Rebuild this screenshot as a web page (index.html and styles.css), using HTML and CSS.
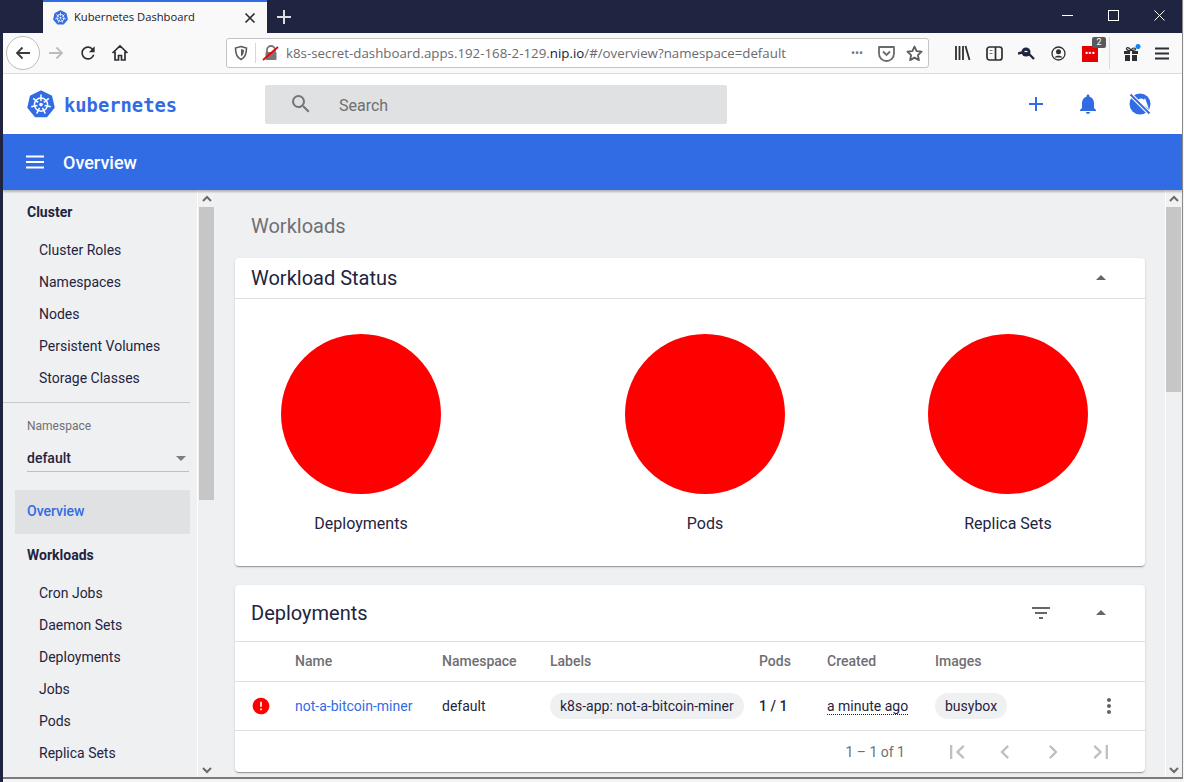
FILE: index.html
```html
<!DOCTYPE html>
<html lang="en">
<head>
  <meta charset="UTF-8">
  <title>Kubernetes Dashboard</title>
  <link rel="stylesheet" href="styles.css">
</head>
<body>
  <svg class="defs" width="0" height="0">
    <symbol id="k8s" viewBox="0 0 28 28">
      <polygon points="14,1.5 24.2,6.4 26.7,17.4 19.6,26.2 8.4,26.2 1.3,17.4 3.8,6.4" fill="#326ce5" stroke="#326ce5" stroke-width="2" stroke-linejoin="round"/>
      <g stroke="#fff" fill="none" stroke-width="1.5">
        <circle cx="14" cy="14.6" r="6.6"/>
        <path d="M14 4.6v6.4M21.8 8.4l-5 4M23.8 16.8l-6.2-1.4M18.3 23.6l-2.8-5.7M9.7 23.6l2.8-5.7M4.2 16.8l6.2-1.4M6.2 8.4l5 4"/>
      </g>
      <circle cx="14" cy="14.6" r="1.8" fill="#fff"/>
    </symbol>
  </svg>

  <div class="window">
    <div class="titlebar">
      <div class="tab">
        <svg class="favicon" width="15" height="15"><use href="#k8s"/></svg>
        <span class="tab-title">Kubernetes Dashboard</span>
        <svg class="tab-close" width="12" height="12" viewBox="0 0 12 12"><path d="M1.5 1.5l9 9M10.5 1.5l-9 9" stroke="#2a2a2e" stroke-width="1.6"/></svg>
      </div>
      <svg class="new-tab" width="14" height="14" viewBox="0 0 14 14"><path d="M7 0v14M0 7h14" stroke="#dcdde3" stroke-width="2"/></svg>
      <div class="win-controls">
        <div class="win-btn"><svg width="11" height="11" viewBox="0 0 11 11"><path d="M0 5.5h11" stroke="#fff"/></svg></div>
        <div class="win-btn"><svg width="11" height="11" viewBox="0 0 11 11"><rect x=".5" y=".5" width="10" height="10" fill="none" stroke="#fff"/></svg></div>
        <div class="win-btn"><svg width="11" height="11" viewBox="0 0 11 11"><path d="M.5.5l10 10M10.500.5l-10 10" stroke="#fff"/></svg></div>
      </div>
    </div>

    <div class="toolbar">
      <div class="back-btn">
        <svg width="18" height="18" viewBox="0 0 18 18"><path d="M16 9H3M8.500 3.500L3 9l5.500 5.500" fill="none" stroke="#3b3b40" stroke-width="1.800"/></svg>
      </div>
      <div class="tool-btn">
        <svg width="18" height="18" viewBox="0 0 18 18"><path d="M2 9h13M9.500 3.500L15 9l-5.500 5.500" fill="none" stroke="#bcbcbf" stroke-width="1.800"/></svg>
      </div>
      <div class="tool-btn">
        <svg width="20" height="20" viewBox="0 0 24 24"><path fill="#2f2f33" d="M17.650 6.350A7.958 7.958 0 0 0 12 4c-4.420 0-7.990 3.580-7.990 8s3.570 8 7.990 8c3.730 0 6.840-2.550 7.730-6h-2.080A5.990 5.990 0 0 1 12 18c-3.310 0-6-2.690-6-6s2.690-6 6-6c1.660 0 3.140.690 4.220 1.780L13 11h7V4l-2.350 2.350z"/></svg>
      </div>
      <div class="tool-btn">
        <svg width="18" height="18" viewBox="0 0 18 18"><path d="M1.500 9L9 2l7.500 7M4 7.500V16h3.500v-4.500h3V16H14V7.500" fill="none" stroke="#2f2f33" stroke-width="1.700"/></svg>
      </div>

      <div class="urlbar">
        <svg class="url-shield" width="16" height="16" viewBox="0 0 16 16"><path d="M8 1.500l5.500 1.500c0 5-1 9.500-5.500 11.500C3.500 12.500 2.500 8 2.500 3z" fill="none" stroke="#5b5b60" stroke-width="1.600"/><path d="M8 4v7.500c2-1.200 3-3.500 3-6.500z" fill="#5b5b60"/></svg>
        <span class="url-sep"></span>
        <svg class="url-lock" width="18" height="18" viewBox="0 0 18 18"><path d="M5 8V6a4 4 0 0 1 8 0v2" fill="none" stroke="#77777b" stroke-width="1.800"/><rect x="3.500" y="8" width="11" height="8" rx="1" fill="#77777b"/><path d="M1 16L16 3" stroke="#f00000" stroke-width="1.800"/></svg>
        <span class="url-text">k8s-secret-dashboard.apps.192-168-2-129.<b>nip.io</b>/#/overview?namespace=default</span>
        <span class="url-dots">•••</span>
        <svg class="url-icon" width="17" height="17" viewBox="0 0 17 17"><path d="M1 2h15v6.500a7.500 7.500 0 0 1-15 0z" fill="none" stroke="#6a6a6e" stroke-width="1.800" stroke-linejoin="round"/><path d="M5 6.500l3.500 3.500L12 6.500" fill="none" stroke="#6a6a6e" stroke-width="1.800"/></svg>
        <svg class="url-icon" width="17" height="17" viewBox="0 0 17 17"><path d="M8.500 1.500l2.100 4.600 5 .6-3.700 3.400 1 5-4.400-2.500-4.400 2.500 1-5L1.400 6.700l5-.6z" fill="none" stroke="#5b5b60" stroke-width="1.800" stroke-linejoin="round"/></svg>
      </div>

      <div class="tool-right">
        <div class="ext-btn"><svg width="17" height="16" viewBox="0 0 17 16"><path d="M2 1v14M5.500 1v14M9 1v14M11.500 1l4 14" stroke="#2f2f33" stroke-width="1.800" fill="none"/></svg></div>
        <div class="ext-btn"><svg width="17" height="15" viewBox="0 0 17 15"><rect x="1" y="1" width="15" height="13" rx="2.500" fill="none" stroke="#2f2f33" stroke-width="1.700"/><path d="M9.500 1v13" stroke="#2f2f33" stroke-width="1.700"/><path d="M3.500 4.500h3M3.500 7.500h3" stroke="#77777b" stroke-width="1.200"/></svg></div>
        <div class="ext-btn"><svg width="17" height="14" viewBox="0 0 17 14"><circle cx="8" cy="6" r="4.500" fill="#20243f"/><path d="M0 7.500l4-1M11 8l5 5" stroke="#20243f" stroke-width="2.400"/><path d="M6.500 5.500h3" stroke="#fff" stroke-width="1.200"/></svg></div>
        <div class="ext-btn"><svg width="15" height="15" viewBox="0 0 15 15"><circle cx="7.500" cy="7.500" r="6.500" fill="none" stroke="#2f2f33" stroke-width="1.300"/><circle cx="7.500" cy="5.800" r="2.500" fill="#2f2f33"/><path d="M3.500 11.500c1-2.500 7-2.500 8 0" fill="#2f2f33"/></svg></div>
        <div class="ext-btn ext-pass">
          <span class="pass-box">•••</span>
          <span class="pass-badge">2</span>
        </div>
        <span class="tool-sep"></span>
        <div class="ext-btn ext-gift"><svg width="18" height="18" viewBox="0 0 18 18"><path d="M1 7h6v3H1zM9 7h6v3H9zM2 11h5v6H2zM9 11h5v6H9z" fill="#2f2f33"/><path d="M8 6C6 3 3 3 3.500 5S6 6.500 8 6.500 13 6 12.500 5 10 3 8 6z" fill="none" stroke="#2f2f33" stroke-width="1.200"/><circle cx="15" cy="2.500" r="2.500" fill="#0a84ff"/></svg></div>
        <div class="ext-btn"><svg width="14" height="13" viewBox="0 0 14 13"><path d="M0 1.500h14M0 6.500h14M0 11.500h14" stroke="#2f2f33" stroke-width="1.800"/></svg></div>
      </div>
    </div>

    <header class="app-header">
      <div class="brand">
        <svg width="28" height="28"><use href="#k8s"/></svg>
        <span class="brand-name">kubernetes</span>
      </div>
      <div class="search">
        <svg width="24" height="24" viewBox="0 0 24 24"><path fill="#757575" d="M15.500 14h-.790l-.280-.270A6.471 6.471 0 0 0 16 9.500 6.500 6.500 0 1 0 9.500 16c1.610 0 3.090-.590 4.230-1.570l.270.280v.790l5 4.990L20.490 19l-4.990-5zm-6 0C7.010 14 5 11.990 5 9.500S7.010 5 9.500 5 14 7.010 14 9.500 11.990 14 9.500 14z"/></svg>
        <span>Search</span>
      </div>
      <div class="header-actions">
        <svg width="24" height="24" viewBox="0 0 24 24"><path d="M19 13h-6v6h-2v-6H5v-2h6V5h2v6h6v2z"/></svg>
        <svg width="24" height="24" viewBox="0 0 24 24"><path d="M12 22c1.100 0 2-.900 2-2h-4c0 1.100.890 2 2 2zm6-6v-5c0-3.070-1.640-5.640-4.500-6.320V4c0-.830-.670-1.500-1.500-1.500s-1.500.670-1.500 1.500v.680C7.630 5.360 6 7.920 6 11v5l-2 2v1h16v-1l-2-2z"/></svg>
        <svg width="24" height="24" viewBox="0 0 24 24"><circle cx="12" cy="12" r="10.500"/><circle cx="13" cy="10" r="3.600" fill="#fff"/><path d="M17 6l4 11-7-5z" fill="#fff"/><path d="M3 3l18 18" stroke="#fff" stroke-width="4"/><path d="M2.500 2.500l19 19" stroke="#326ce5" stroke-width="2"/></svg>
      </div>
    </header>

    <div class="page-bar">
      <svg width="20" height="14" viewBox="0 0 20 14"><path d="M1 1.500h18M1 7h18M1 12.500h18" stroke="#fff" stroke-width="2"/></svg>
      <span class="page-title">Overview</span>
    </div>

    <div class="content">
      <nav class="side">
        <div class="side-head">Cluster</div>
        <a class="side-item">Cluster Roles</a>
        <a class="side-item">Namespaces</a>
        <a class="side-item">Nodes</a>
        <a class="side-item">Persistent Volumes</a>
        <a class="side-item">Storage Classes</a>
        <div class="side-divider"></div>
        <div class="ns-label">Namespace</div>
        <div class="ns-select">
          <span>default</span>
          <span class="ns-caret"></span>
        </div>
        <a class="side-active">Overview</a>
        <div class="side-head side-head-tight">Workloads</div>
        <a class="side-item">Cron Jobs</a>
        <a class="side-item">Daemon Sets</a>
        <a class="side-item">Deployments</a>
        <a class="side-item">Jobs</a>
        <a class="side-item">Pods</a>
        <a class="side-item">Replica Sets</a>
      </nav>
      <div class="vscroll side-scroll">
        <div class="scroll-arrow"><svg width="10" height="7" viewBox="0 0 10 7"><path d="M1 6l4-4 4 4" fill="none" stroke="#6a6a6a" stroke-width="2"/></svg></div>
        <div class="thumb thumb-side"></div>
        <div class="scroll-fill"></div>
        <div class="scroll-arrow scroll-arrow-end"><svg width="10" height="7" viewBox="0 0 10 7"><path d="M1 1l4 4 4-4" fill="none" stroke="#6a6a6a" stroke-width="2"/></svg></div>
      </div>

      <main class="main">
        <h2 class="section-title">Workloads</h2>

        <section class="card">
          <div class="card-head card-head-small">
            <h3>Workload Status</h3>
            <svg class="collapse" width="24" height="24" viewBox="0 0 24 24"><path d="M7 14l5-5 5 5z"/></svg>
          </div>
          <div class="charts">
            <div class="chart"><div class="circle"></div><div class="chart-label">Deployments</div></div>
            <div class="chart"><div class="circle"></div><div class="chart-label">Pods</div></div>
            <div class="chart"><div class="circle"></div><div class="chart-label">Replica Sets</div></div>
          </div>
        </section>

        <section class="card">
          <div class="card-head">
            <h3>Deployments</h3>
            <svg class="filter" width="24" height="24" viewBox="0 0 24 24"><path d="M10 18h4v-2h-4v2zM3 6v2h18V6H3zm3 7h12v-2H6v2z"/></svg>
            <svg class="collapse" width="24" height="24" viewBox="0 0 24 24"><path d="M7 14l5-5 5 5z"/></svg>
          </div>
          <table class="grid">
            <colgroup>
              <col class="c-status"><col class="c-name"><col class="c-ns"><col class="c-labels"><col class="c-pods"><col class="c-created"><col class="c-images"><col>
            </colgroup>
            <thead>
              <tr><th></th><th>Name</th><th>Namespace</th><th>Labels</th><th>Pods</th><th>Created</th><th>Images</th><th></th></tr>
            </thead>
            <tbody>
              <tr>
                <td class="status-cell"><svg width="20" height="20" viewBox="0 0 24 24"><path fill="#f00" d="M12 2C6.480 2 2 6.480 2 12s4.480 10 10 10 10-4.480 10-10S17.520 2 12 2zm1 15h-2v-2h2v2zm0-4h-2V7h2v6z"/></svg></td>
                <td><a class="link">not-a-bitcoin-miner</a></td>
                <td>default</td>
                <td><span class="chip">k8s-app: not-a-bitcoin-miner</span></td>
                <td class="pods">1 / 1</td>
                <td><span class="age">a minute ago</span></td>
                <td><span class="chip">busybox</span></td>
                <td class="menu-cell"><svg width="24" height="24" viewBox="0 0 24 24"><path fill="#5f6368" d="M12 8c1.100 0 2-.900 2-2s-.900-2-2-2-2 .900-2 2 .900 2 2 2zm0 2c-1.100 0-2 .900-2 2s.900 2 2 2 2-.900 2-2-.900-2-2-2zm0 6c-1.100 0-2 .900-2 2s.900 2 2 2 2-.900 2-2-.900-2-2-2z"/></svg></td>
              </tr>
            </tbody>
          </table>
          <div class="pager">
            <span class="pager-range">1 – 1 of 1</span>
            <span class="pager-btn"><svg width="28" height="28" viewBox="0 0 24 24"><path d="M18.410 16.590L13.820 12l4.590-4.590L17 6l-6 6 6 6zM6 6h2v12H6z"/></svg></span>
            <span class="pager-btn"><svg width="28" height="28" viewBox="0 0 24 24"><path d="M15.410 7.410L14 6l-6 6 6 6 1.410-1.410L10.830 12z"/></svg></span>
            <span class="pager-btn"><svg width="28" height="28" viewBox="0 0 24 24"><path d="M10 6L8.590 7.410 13.170 12l-4.580 4.590L10 18l6-6z"/></svg></span>
            <span class="pager-btn"><svg width="28" height="28" viewBox="0 0 24 24"><path d="M5.590 7.410L10.180 12l-4.590 4.590L7 18l6-6-6-6zM16 6h2v12h-2z"/></svg></span>
          </div>
        </section>
      </main>
      <div class="vscroll main-scroll">
        <div class="scroll-arrow"><svg width="10" height="7" viewBox="0 0 10 7"><path d="M1 6l4-4 4 4" fill="none" stroke="#6a6a6a" stroke-width="2"/></svg></div>
        <div class="thumb thumb-main"></div>
        <div class="scroll-fill"></div>
        <div class="scroll-arrow scroll-arrow-end"><svg width="10" height="7" viewBox="0 0 10 7"><path d="M1 1l4 4 4-4" fill="none" stroke="#6a6a6a" stroke-width="2"/></svg></div>
      </div>
    </div>
  </div>
</body>
</html>
```

FILE: styles.css
```css
:root {
  --navy: #1f2440;
  --blue: #326ce5;
  --grey-text: #6f6f73;
  --panel: #eff0f2;
  --line: #dfdfe1;
  --thumb: #c6c6c6;
}

* {
  box-sizing: border-box;
}

html, body {
  height: 782px;
  margin: 0;
  overflow: hidden;
}

body {
  background: #f4f4f4;
  border-left: 3px solid var(--navy);
  font-family: Roboto, sans-serif;
  font-size: 14px;
  color: var(--navy);
}

.defs {
  display: block;
  height: 0;
}

.window {
  width: 1180px;
  height: 779px;
  border-right: 1px solid #8a8a8a;
  border-bottom: 2px solid #7d7a7a;
  overflow: hidden;
}

/* browser chrome */
.titlebar {
  display: flex;
  align-items: center;
  height: 33px;
  background: var(--navy);
}

.tab {
  display: flex;
  align-items: center;
  width: 224px;
  height: 33px;
  margin-left: 40px;
  padding: 0 11px 0 10px;
  background: #f9f9fa;
  border-top: 2px solid var(--blue);
}

.favicon {
  flex: none;
}

.tab-title {
  flex: 1;
  margin-left: 6px;
  padding-bottom: 2px;
  font-family: "Open Sans", sans-serif;
  font-size: 11.2px;
  color: #1a1a1e;
}

.new-tab {
  margin-left: 10px;
}

.win-controls {
  display: flex;
  margin-left: auto;
}

.win-btn {
  display: flex;
  align-items: center;
  justify-content: center;
  width: 46px;
  height: 33px;
  padding-bottom: 3px;
}

.toolbar {
  display: flex;
  align-items: center;
  height: 41px;
  padding-left: 3px;
  background: #f9f9fa;
  border-bottom: 1px solid #dddddf;
}

.back-btn {
  display: flex;
  align-items: center;
  justify-content: center;
  width: 34px;
  height: 34px;
  background: #fff;
  border: 1px solid #bdbdbd;
  border-radius: 50%;
}

.tool-btn {
  display: flex;
  align-items: center;
  justify-content: center;
  width: 32px;
  height: 32px;
}

.urlbar {
  display: flex;
  align-items: center;
  width: 703px;
  height: 30px;
  margin-left: 90px;
  padding: 0 5px 0 6px;
  background: #fff;
  border: 1px solid #c4c4c6;
  border-radius: 3px;
}

.url-sep {
  width: 1px;
  height: 20px;
  margin: 0 6px 0 6px;
  background: #d8d8da;
}

.url-text {
  flex: 1;
  margin-left: 6px;
  font-family: "Open Sans", sans-serif;
  font-size: 13.3px;
  color: #6a6a70;
  white-space: nowrap;
}

.url-text b {
  font-weight: 400;
  color: #16193a;
}

.url-dots {
  width: 20px;
  font-size: 12px;
  letter-spacing: 0;
  text-align: center;
  color: #77777b;
}

.url-icon {
  margin-left: 11px;
  flex: none;
}

.tool-right {
  display: flex;
  align-items: center;
  margin-left: 17px;
}

.ext-btn {
  position: relative;
  display: flex;
  align-items: center;
  justify-content: center;
  width: 32px;
  height: 32px;
}

.pass-box {
  width: 16px;
  height: 16px;
  margin-top: 2px;
  background: #e60000;
  font-size: 10px;
  line-height: 16px;
  text-align: center;
  color: #fff;
}

.pass-badge {
  position: absolute;
  top: 0;
  right: 0;
  width: 14px;
  height: 11px;
  background: #5a5a5e;
  border-radius: 2px;
  font-size: 9px;
  line-height: 11px;
  text-align: center;
  color: #fff;
}

.tool-sep {
  width: 1px;
  height: 32px;
  margin-left: 3px;
  background: #dcdcde;
}

.ext-gift {
  margin-left: 6px;
  margin-right: -2px;
}

/* dashboard header */
.app-header {
  display: flex;
  align-items: center;
  height: 60px;
  background: #fff;
}

.brand {
  display: flex;
  align-items: center;
  width: 262px;
  padding-left: 24px;
}

.brand-name {
  margin-left: 9px;
  padding-top: 2px;
  font-family: "DejaVu Sans Mono", monospace;
  font-size: 18.800px;
  font-weight: 700;
  color: var(--blue);
}

.search {
  display: flex;
  align-items: center;
  width: 462px;
  height: 39px;
  padding-left: 24px;
  background: #dfe1e2;
  border-radius: 2px;
  font-size: 16px;
  color: #6f6f73;
}

.search span {
  margin-left: 26px;
  padding-top: 2px;
}

.header-actions {
  display: flex;
  gap: 28px;
  margin-left: auto;
  padding-right: 30px;
}

.header-actions svg {
  fill: var(--blue);
}

.page-bar {
  position: relative;
  display: flex;
  align-items: center;
  height: 56px;
  padding-left: 22px;
  background: var(--blue);
  box-shadow: 0 2px 2px rgba(0, 0, 0, .25);
}

.page-title {
  margin-left: 18px;
  font-size: 18px;
  font-weight: 500;
  color: #fff;
}

/* sidebar */
.content {
  display: flex;
  height: 587px;
  background: var(--panel);
}

.side {
  flex: none;
  width: 195px;
  overflow: hidden;
  border-right: 1px solid #fff;
  margin-right: 1px;
}

.side-head {
  height: 44px;
  padding-left: 24px;
  font-weight: 700;
  line-height: 44px;
}

.side-head-tight {
  height: 43px;
  line-height: 43px;
}

.side-item {
  display: block;
  height: 32px;
  padding-left: 36px;
  line-height: 32px;
}

.side-divider {
  height: 1px;
  margin: 8px 7px 0 0;
  background: #c9c9cb;
}

.ns-label {
  padding: 15px 0 0 24px;
  font-size: 12px;
  line-height: 16px;
  color: var(--grey-text);
}

.ns-select {
  display: flex;
  align-items: center;
  justify-content: space-between;
  height: 24px;
  margin: 14px 8px 18px 24px;
  padding-right: 3px;
  padding-bottom: 3px;
  border-bottom: 1px solid #c0c0c2;
  font-weight: 500;
  line-height: 20px;
}

.ns-caret {
  width: 0;
  height: 0;
  border: 5px solid transparent;
  border-top-color: #807d7d;
  border-bottom: 0;
}

.side-active {
  display: block;
  height: 44px;
  margin: 0 7px 0 12px;
  padding-left: 12px;
  background: #dfe1e2;
  font-weight: 500;
  line-height: 42px;
  color: var(--blue);
}

/* fake scrollbars */
.vscroll {
  display: flex;
  flex-direction: column;
  flex: none;
}

.side-scroll {
  width: 15px;
  margin-right: 1px;
}

.main-scroll {
  width: 16px;
  border-left: 1px solid #fff;
}

.scroll-arrow {
  display: flex;
  align-items: center;
  justify-content: center;
  height: 17px;
  background: #f2f2f3;
}

.scroll-arrow-end {
  padding-top: 4px;
  background: none;
}

.thumb {
  background: var(--thumb);
}

.thumb-side {
  height: 293px;
}

.thumb-main {
  height: 185px;
}

.scroll-fill {
  flex: 1;
}

/* main area */
.main {
  flex: none;
  width: 950px;
  padding: 0 20px;
  overflow: hidden;
}

.section-title {
  margin: 24px 0 20px 16px;
  font-size: 20px;
  font-weight: 400;
  line-height: 24px;
  color: var(--grey-text);
}

.card {
  margin-bottom: 19px;
  background: #fff;
  border-radius: 4px;
  box-shadow: 0 2px 1px -1px rgba(0, 0, 0, .2), 0 1px 1px rgba(0, 0, 0, .14), 0 1px 3px rgba(0, 0, 0, .12);
}

.card-head {
  display: flex;
  align-items: center;
  height: 57px;
  padding: 0 32px 0 16px;
  border-bottom: 1px solid var(--line);
}

.card-head-small {
  height: 41px;
}

.card-head h3 {
  flex: 1;
  margin: 0;
  font-size: 20px;
  font-weight: 400;
}

.collapse, .filter {
  fill: #666;
}

.filter {
  margin-right: 36px;
}

.charts {
  display: grid;
  grid-template-columns: 252px 436px 170px;
  height: 267px;
  padding-top: 35px;
}

.chart {
  display: flex;
  flex-direction: column;
  align-items: center;
}

.circle {
  flex: none;
  width: 160px;
  height: 160px;
  background: #f00;
  border-radius: 50%;
}

.chart-label {
  margin-top: 21px;
  font-size: 16px;
  line-height: 18px;
  white-space: nowrap;
}

/* table */
.grid {
  width: 100%;
  table-layout: fixed;
  border-collapse: collapse;
}

.c-status { width: 60px; }
.c-name { width: 147px; }
.c-ns { width: 108px; }
.c-labels { width: 209px; }
.c-pods { width: 68px; }
.c-created { width: 108px; }
.c-images { width: 155px; }

.grid th {
  height: 39px;
  padding: 0;
  border-bottom: 1px solid var(--line);
  font-weight: 500;
  text-align: left;
  color: var(--grey-text);
}

.grid td {
  height: 49px;
  padding: 0;
  border-bottom: 1px solid var(--line);
  white-space: nowrap;
}

.status-cell {
  padding-left: 16px !important;
}

.status-cell svg, .menu-cell svg {
  display: block;
}

.menu-cell svg {
  margin-left: 7px;
}

.link {
  color: var(--blue);
}

.pods {
  font-weight: 500;
}

.chip {
  display: inline-block;
  height: 26px;
  padding: 0 10px;
  background: #eff0f2;
  border-radius: 13px;
  line-height: 26px;
}

.age {
  border-bottom: 1px dotted var(--navy);
}

.pager {
  display: flex;
  align-items: center;
  justify-content: flex-end;
  height: 41px;
  padding-top: 2px;
  padding-right: 20px;
}

.pager-range {
  margin-right: 28px;
  color: var(--grey-text);
}

.pager-btn {
  display: flex;
  justify-content: center;
  width: 48px;
  fill: #c0c0c2;
}
```
